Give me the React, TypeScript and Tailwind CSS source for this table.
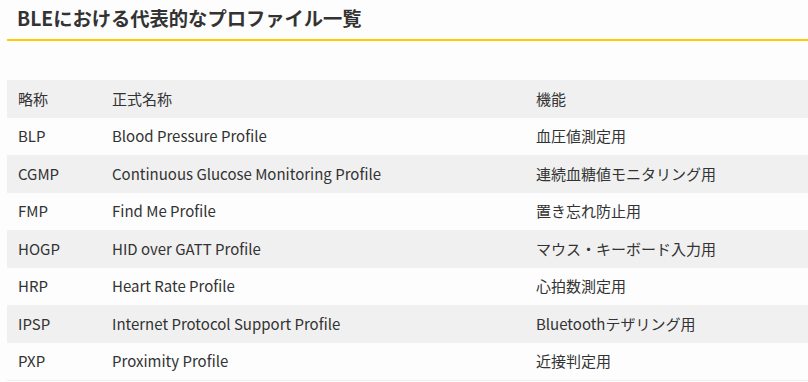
import React from "react";

const rows: [string, string, string][] = [
  ["BLP", "Blood Pressure Profile", "血圧値測定用"],
  ["CGMP", "Continuous Glucose Monitoring Profile", "連続血糖値モニタリング用"],
  ["FMP", "Find Me Profile", "置き忘れ防止用"],
  ["HOGP", "HID over GATT Profile", "マウス・キーボード入力用"],
  ["HRP", "Heart Rate Profile", "心拍数測定用"],
  ["IPSP", "Internet Protocol Support Profile", "Bluetoothテザリング用"],
  ["PXP", "Proximity Profile", "近接判定用"],
];

export default function App() {
  const all: [string, string, string][] = [["略称", "正式名称", "機能"], ...rows];
  return (
    <div
      className="w-[808px] h-[382px] overflow-hidden bg-[#fdfdfd] text-[#333333]"
      style={{ fontFamily: '"Noto Sans CJK JP", "Noto Sans", sans-serif' }}
    >
      <div className="pl-[7px]">
        <h2 className="h-[39px] pl-[10px] pt-[3px] text-[19.3px] font-bold leading-[30px] text-[#333333]">
          BLEにおける代表的なプロファイル一覧
        </h2>
        <div className="h-[2px] bg-[#ffcc00]" />
        <div className="mt-[39px]">
          {all.map((r, i) => (
            <div
              key={i}
              className={`flex h-[37.5px] items-center text-[15px] ${
                i % 2 === 0 ? "bg-[#f0f0f0]" : "bg-[#fdfdfd]"
              }`}
            >
              <div className="w-[105px] pl-[11px]">{r[0]}</div>
              <div className="w-[424px]">{r[1]}</div>
              <div className="flex-1">{r[2]}</div>
            </div>
          ))}
          <div className="h-px bg-[#eeeeee]" />
        </div>
      </div>
    </div>
  );
}
